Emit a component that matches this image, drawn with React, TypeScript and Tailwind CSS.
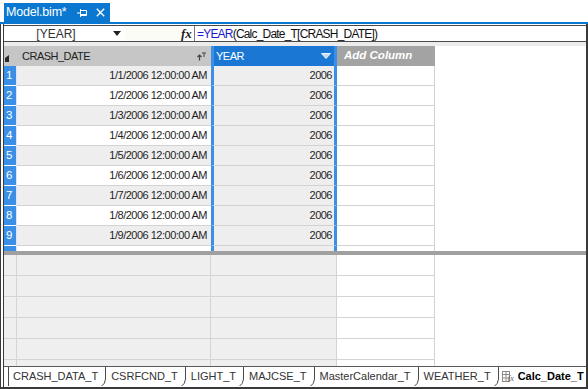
import React from 'react';

const dates = [1, 2, 3, 4, 5, 6, 7, 8, 9];

function TabSep() {
  return (
    <svg width="8" height="20" viewBox="0 0 8 20" className="shrink-0">
      <path d="M6.5 0 V12 Q6.5 17 1.5 20" stroke="#4a4a4a" strokeWidth="1" fill="none" />
    </svg>
  );
}

function SheetTab({ label, active }: { label: string; active?: boolean }) {
  return (
    <div className="flex items-stretch h-full shrink-0">
      {active && (
        <svg width="14" height="11" viewBox="0 0 14 11" className="self-center ml-[2px] mr-[1px]">
          <rect x="0.5" y="0.5" width="7" height="10" fill="#fff" stroke="#8a8a8a" />
          <line x1="0.5" y1="3.5" x2="7.5" y2="3.5" stroke="#8a8a8a" />
          <line x1="0.5" y1="7" x2="7.5" y2="7" stroke="#8a8a8a" />
          <line x1="4" y1="0.5" x2="4" y2="10.5" stroke="#8a8a8a" />
          <text x="5.5" y="10" fontSize="9" fontStyle="italic" fontFamily="Liberation Serif, serif" fill="#6a6a6a">fx</text>
        </svg>
      )}
      <span
        className={
          'self-center text-[11px] leading-none whitespace-nowrap ' +
          (active ? 'font-bold text-black pl-[1px] pr-[1px]' : 'text-[#333] pl-[4px] pr-[1px]')
        }
      >
        {label}
      </span>
      <TabSep />
    </div>
  );
}

export default function App() {
  return (
    <div className="w-[588px] h-[389px] bg-white flex flex-col overflow-hidden font-['Liberation_Sans',Arial,sans-serif] text-[#1e1e1e]">
      {/* document tab strip */}
      <div className="h-[22px] flex items-end pl-[4px] shrink-0">
        <div className="h-[19px] w-[106px] bg-[#0a78d0] text-white flex items-center pl-[2px]">
          <span className="text-[12.5px] leading-none tracking-[-0.2px]">Model.bim*</span>
          <svg className="ml-[10px]" width="10" height="8" viewBox="0 0 10 8">
            <line x1="0" y1="4" x2="3" y2="4" stroke="#fff" strokeWidth="1" />
            <line x1="3.5" y1="0" x2="3.5" y2="8" stroke="#fff" strokeWidth="1" />
            <path d="M3.5 1.5 H9.5 V6.5 H3.5" stroke="#fff" strokeWidth="1" fill="none" />
            <line x1="3.5" y1="5.5" x2="9.5" y2="5.5" stroke="#fff" strokeWidth="1" />
          </svg>
          <svg className="ml-[9px]" width="9" height="9" viewBox="0 0 9 9">
            <path d="M0.8 0.8 L8.2 8.2 M8.2 0.8 L0.8 8.2" stroke="#fff" strokeWidth="1.4" />
          </svg>
        </div>
      </div>
      <div className="h-[2px] bg-[#0a78d0] shrink-0" />

      {/* frame */}
      <div className="flex-1 min-h-0 flex border-l border-r-2 border-b-2 border-[#3a3a3a] pl-[2px]">
        <div className="flex-1 min-w-0 flex flex-col border-l border-[#3a3a3a]">
          <div className="h-[1px] shrink-0" />
          {/* formula bar */}
          <div className="h-[17px] shrink-0 flex items-stretch border-y border-[#4a4a4a]">
            <div className="w-[121px] flex items-center">
              <span className="w-[104px] text-center text-[12px] leading-none text-[#333]">[YEAR]</span>
              <svg className="ml-[5px]" width="8" height="5" viewBox="0 0 8 5">
                <path d="M0 0 H8 L4 5 Z" fill="#222" />
              </svg>
            </div>
            <div className="w-[55px] bg-[#fcfcf6]" />
            <div className="w-[14px] flex items-center pl-[1px]">
              <span className="font-['Liberation_Serif',serif] italic font-bold text-[13px] leading-none text-[#222]">fx</span>
            </div>
            <div className="w-[1px] bg-[#7a7a7a]" />
            <div className="flex items-center pl-[2px] text-[12px] leading-none tracking-[-0.8px] text-[#111]">
              <span className="text-[#1a1ad0]">=YEAR</span>
              <span>(Calc_Date_T[CRASH_DATE])</span>
            </div>
          </div>
          <div className="h-[4px] shrink-0 bg-[#ececec]" />

          {/* header row */}
          <div className="h-[20px] shrink-0 flex text-[11px] tracking-[-0.5px]">
            <div className="w-[13px] bg-[#c6c6c6] flex items-end pl-[1px] pb-[4px]">
              <svg width="4" height="7" viewBox="0 0 4 7">
                <path d="M4 0 V7 H0 V3 Z" fill="#2a2a2a" />
              </svg>
            </div>
            <div className="w-[194px] bg-[#c6c6c6] flex items-center justify-between pl-[5px] pr-[5px]">
              <span className="text-[#222]">CRASH_DATE</span>
              <svg width="9" height="9" viewBox="0 0 9 9">
                <path d="M2.5 8.5 V3 M0.5 5 L2.5 3 L4.5 5" stroke="#444" strokeWidth="1.2" fill="none" />
                <path d="M5 1 H9 M7 1 V5" stroke="#444" strokeWidth="1" fill="none" />
              </svg>
            </div>
            <div className="w-[126px] bg-[#1a78d4] border-x-[3px] border-[#3b8fe6] flex items-center justify-between pl-[2px] pr-[3px]">
              <span className="text-white">YEAR</span>
              <svg width="10" height="6" viewBox="0 0 10 6">
                <path d="M0.5 0.5 H9.5 L5 5.5 Z" fill="#c9d9ef" stroke="#eef4fb" strokeWidth="1" />
              </svg>
            </div>
            <div className="w-[98px] bg-[#a3a3a3] flex items-center pl-[7px]">
              <span className="text-white font-bold italic text-[11.5px] tracking-[0px]">Add Column</span>
            </div>
          </div>

          {/* data rows */}
          {dates.map((d) => (
            <div key={d} className="h-[20px] shrink-0 flex text-[11px] tracking-[-0.5px]">
              <div className="w-[13px] bg-[#3b8fe6] border-r border-r-[#d8e6f5] border-b border-b-white flex items-center pl-[2px]">
                <span className="text-white text-[11.5px] tracking-[0px]">{d}</span>
              </div>
              <div
                className={
                  'w-[194px] border-b border-[#d2d2d2] flex items-center justify-end pr-[4px] ' +
                  (d % 2 === 1 ? 'bg-[#eeeeee]' : 'bg-white')
                }
              >
                <span>{`1/${d}/2006 12:00:00 AM`}</span>
              </div>
              <div className="w-[126px] bg-[#eeeeee] border-x-[3px] border-x-[#3b8fe6] border-b border-b-[#d2d2d2] flex items-center justify-end pr-[2px]">
                <span>2006</span>
              </div>
              <div className="w-[98px] bg-white border-b border-r border-[#d2d2d2]" />
            </div>
          ))}

          {/* partial row */}
          <div className="h-[5px] shrink-0 flex">
            <div className="w-[13px] bg-[#3b8fe6] border-r border-r-[#d8e6f5]" />
            <div className="w-[194px] bg-white" />
            <div className="w-[126px] bg-[#eeeeee] border-x-[3px] border-x-[#3b8fe6]" />
            <div className="w-[98px] bg-white border-r border-[#d2d2d2]" />
          </div>

          {/* splitter */}
          <div className="h-[4px] shrink-0 bg-[#a0a0a0]" />

          {/* lower pane */}
          <div className="h-[111px] shrink-0 overflow-hidden flex flex-col">
            {[0, 1, 2, 3, 4, 5].map((i) => (
              <div key={i} className="h-[21px] shrink-0 flex">
                <div className="w-[13px] bg-[#efefef] border-r border-b border-[#d4d4d4]" />
                <div className="w-[194px] bg-[#efefef] border-r border-b border-[#d4d4d4]" />
                <div className="w-[126px] bg-[#efefef] border-r border-b border-[#d4d4d4]" />
                <div className="w-[98px] bg-white border-r border-b border-[#d4d4d4]" />
              </div>
            ))}
          </div>

          {/* sheet tabs */}
          <div className="h-[20px] shrink-0 border-t border-[#5a5a5a] flex pl-[4px] bg-white overflow-hidden">
            <div className="flex items-stretch border-l border-[#4a4a4a] h-full">
              <SheetTab label="CRASH_DATA_T" />
              <SheetTab label="CSRFCND_T" />
              <SheetTab label="LIGHT_T" />
              <SheetTab label="MAJCSE_T" />
              <SheetTab label="MasterCalendar_T" />
              <SheetTab label="WEATHER_T" />
              <SheetTab label="Calc_Date_T" active />
            </div>
          </div>
        </div>
      </div>
    </div>
  );
}
